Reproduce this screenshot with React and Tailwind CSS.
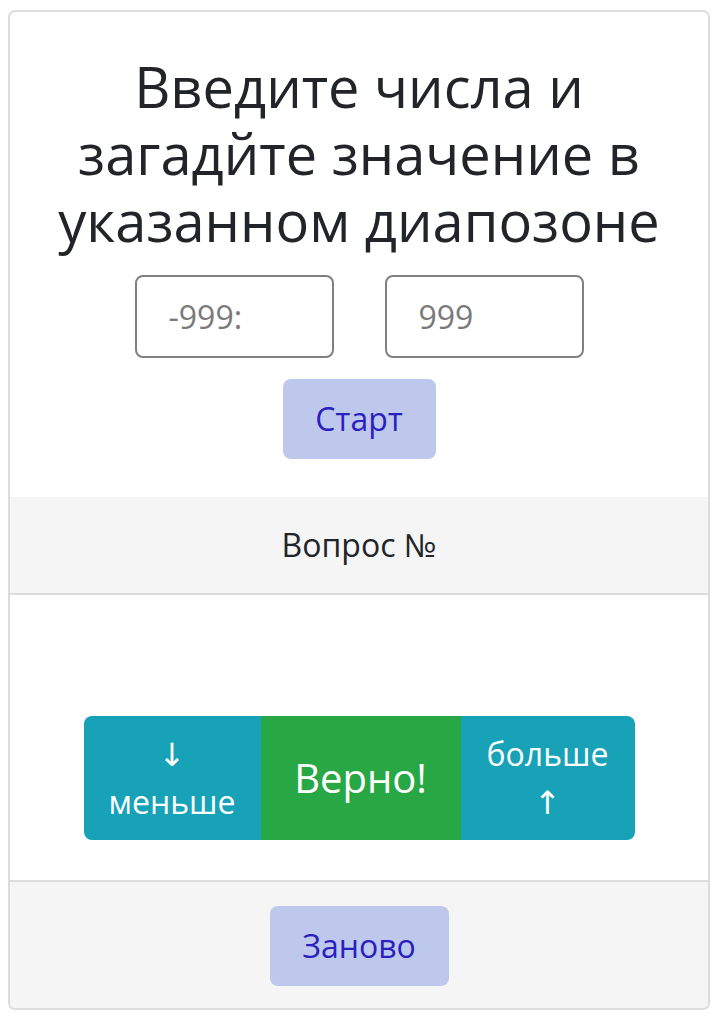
import React from 'react';

const font = { fontFamily: '"Open Sans", "DejaVu Sans", sans-serif' };

export default function App() {
  return (
    <div className="bg-white min-h-[1020px] pt-[10px] px-[8px]" style={font}>
      <div className="w-[702px] border-2 border-[#dcdcdc] rounded-[7px] overflow-hidden">
        {/* — header: title, range inputs, start — */}
        <div className="flex flex-col items-center pt-[41px] pb-[38px]">
          <h1 className="text-[56px] leading-[67px] text-[#212529] text-center font-normal">
            Введите числа и<br />
            загадйте значение в<br />
            указанном диапозоне
          </h1>
          <div className="flex gap-[51px] mt-[21px]">
            <input
              placeholder="-999:"
              className="w-[199px] h-[83px] border-2 border-[#808080] rounded-[8px] pl-[32px] text-[32px] text-[#212529] placeholder:text-[#7a7a7a] outline-none"
            />
            <input
              placeholder="999"
              className="w-[199px] h-[83px] border-2 border-[#808080] rounded-[8px] pl-[32px] text-[32px] text-[#212529] placeholder:text-[#7a7a7a] outline-none"
            />
          </div>
          <button className="mt-[21px] w-[153px] h-[80px] rounded-[8px] bg-[#bec8ec] text-[#2a1fbf] text-[32px]">
            Старт
          </button>
        </div>

        {/* — question number — */}
        <div className="bg-[#f5f5f5] h-[98px] border-b-2 border-[#dcdcdc] flex items-center justify-center text-[32px] text-[#212529]">
          Вопрос №
        </div>

        {/* — answer buttons — */}
        <div className="h-[285px] flex justify-center pt-[121px]">
          <div className="flex h-[124px] rounded-[8px] overflow-hidden text-white">
            <button className="w-[177px] bg-[#17a2b8] flex flex-col items-center justify-center text-[32px] leading-[48px]">
              <span>↓</span>
              <span>меньше</span>
            </button>
            <button className="w-[200px] bg-[#28a745] text-[40px]">Верно!</button>
            <button className="w-[174px] bg-[#17a2b8] flex flex-col items-center justify-center text-[32px] leading-[48px]">
              <span>больше</span>
              <span>↑</span>
            </button>
          </div>
        </div>

        {/* — footer — */}
        <div className="bg-[#f5f5f5] border-t-2 border-[#dcdcdc] h-[128px] flex items-start justify-center pt-[24px]">
          <button className="w-[179px] h-[80px] rounded-[8px] bg-[#bec8ec] text-[#2a1fbf] text-[32px]">
            Заново
          </button>
        </div>
      </div>
    </div>
  );
}
